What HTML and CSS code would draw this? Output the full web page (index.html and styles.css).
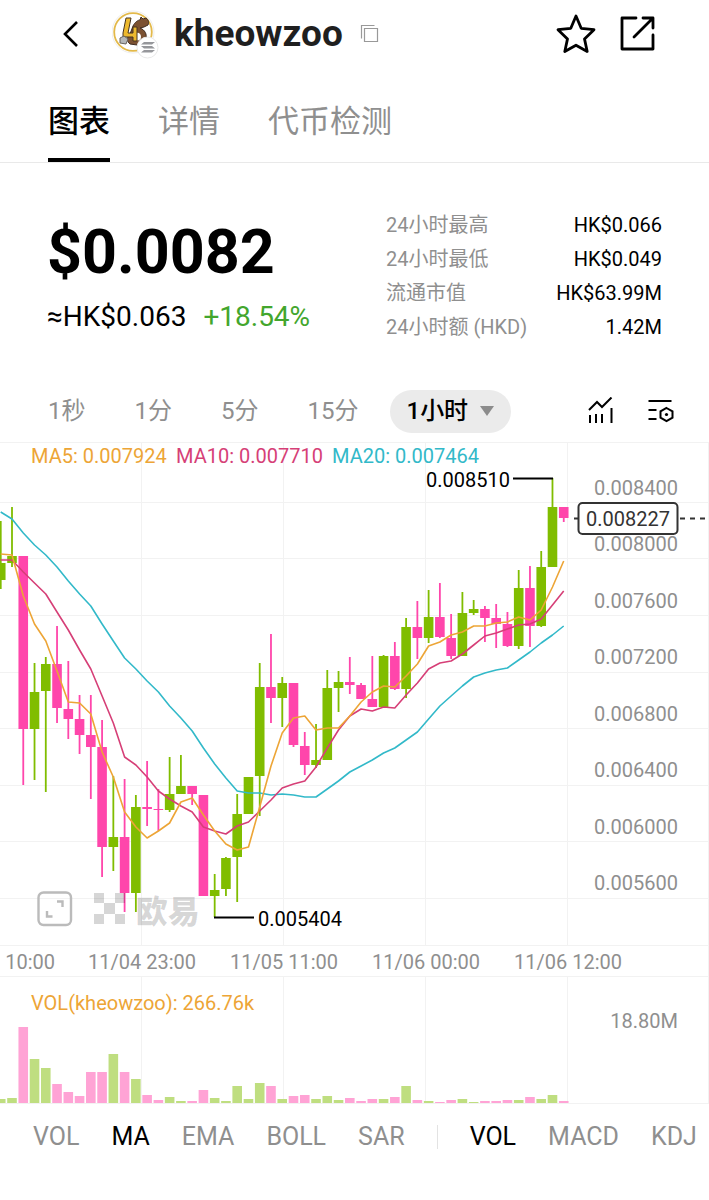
FILE: index.html
```html
<!DOCTYPE html>
<html lang="zh-CN">
<head>
<meta charset="utf-8">
<meta name="viewport" content="width=device-width, initial-scale=1">
<title>kheowzoo</title>
<link rel="stylesheet" href="styles.css">
</head>
<body>
<header class="topbar">
  <button class="icon-btn" aria-label="返回">
    <svg width="20" height="28" viewBox="0 0 20 28"><path d="M17 2 5 14l12 12" fill="none" stroke="#000" stroke-width="2.600"/></svg>
  </button>
  <div class="avatar">
    <svg width="48" height="50" viewBox="0 0 48 50" aria-hidden="true">
      <circle cx="21" cy="23" r="21" fill="#fff" stroke="#eee"/>
      <circle cx="21" cy="23" r="18.800" fill="#fff" stroke="#e3b94a" stroke-width="1.800"/>
      <path d="M21 17c2-4 5-6 7-6l1-3 2 2 3-1c3 2 3 5 2 7l-4 2-4 1c5 2 7 6 6 11-1 4-4 6-9 6l-7-1c-4-3-3-7 0-10z" fill="#7c5232" stroke="#3e2b20"/>
      <path d="M24 24c3-1 5 1 5 4s-3 4-5 3z" fill="#fff"/>
      <path d="M14 9h5l-3 15h5v-6h4v14h-4v-4H11v-4z" fill="#edb92e" stroke="#473420"/>
      <path d="m8 29 4-2 4 3-2 5-6-1z" fill="#b4b7b9" stroke="#68645e"/>
      <circle cx="35.500" cy="38.500" r="10.500" fill="#fff" stroke="#e9e9e9"/>
      <path d="m32 33h11l-3 2.500H29zM29 37h11l3 2.500H32zM32 41h11l-3 2.500H29z" fill="#96979b"/>
    </svg>
  </div>
  <h1 class="token">kheowzoo</h1>
  <button class="icon-btn" aria-label="复制">
    <svg width="20" height="20" viewBox="0 0 20 20" fill="none" stroke="#999" stroke-width="1.200"><path d="M1.500 14.500v-13h13"/><path d="M4.500 4.500h13v13h-13z"/></svg>
  </button>
  <div class="actions">
    <button class="icon-btn" aria-label="收藏">
      <svg width="42" height="42" viewBox="0 0 42 42"><path d="m21 3 5.200 12.300L39 16.700l-9.500 9.200 2.700 12.600L21 32.200 9.800 38.500l2.700-12.600L3 16.700l12.800-1.400z" fill="none" stroke="#000" stroke-width="2.800" stroke-linejoin="round"/></svg>
    </button>
    <button class="icon-btn" aria-label="分享">
      <svg width="38" height="38" viewBox="0 0 38 38" fill="none" stroke="#000" stroke-width="2.800" stroke-linecap="round" stroke-linejoin="round"><path d="M17 3H3v31h31V20M24 3h10v10M34 3 15 22"/></svg>
    </button>
  </div>
</header>

<nav class="tabs">
  <a class="tab tab-on" href="#chart">图表</a>
  <a class="tab" href="#detail">详情</a>
  <a class="tab" href="#check">代币检测</a>
</nav>

<main>
  <section class="summary">
    <div>
      <div class="price">$0.0082</div>
      <div class="sub"><span>≈HK$0.063</span><span class="up">+18.54%</span></div>
    </div>
    <dl class="stats">
      <div class="stat"><dt>24小时最高</dt><dd>HK$0.066</dd></div>
      <div class="stat"><dt>24小时最低</dt><dd>HK$0.049</dd></div>
      <div class="stat"><dt>流通市值</dt><dd>HK$63.99M</dd></div>
      <div class="stat"><dt>24小时额 (HKD)</dt><dd>1.42M</dd></div>
    </dl>
  </section>

  <div class="periods">
    <button class="period">1秒</button>
    <button class="period">1分</button>
    <button class="period">5分</button>
    <button class="period">15分</button>
    <button class="period period-on">1小时<svg width="16" height="10" viewBox="0 0 16 10" aria-hidden="true"><path d="M1 0h14L8 10z" fill="#8c8c8c"/></svg></button>
    <div class="tools">
      <button class="icon-btn" aria-label="指标">
        <svg width="28" height="28" viewBox="0 0 28 28" fill="none" stroke="#000" stroke-width="2"><path d="m2 13 8-8 5 5 9.500-9.500M3 18v8M9 17v9M15 17v9M24.500 11v15"/></svg>
      </button>
      <button class="icon-btn" aria-label="设置">
        <svg width="28" height="28" viewBox="0 0 28 28" fill="none" stroke="#000" stroke-width="2"><path d="M1.500 4h23M1.500 13h8M1.500 22h8M19.500 11l6 3.400v6.200l-6 3.400-6-3.400v-6.200z"/><circle cx="19.500" cy="17.500" r="1.600" fill="#000" stroke="none"/></svg>
      </button>
    </div>
  </div>

  <section class="chart" id="chart">
    <svg class="plot" viewBox="0 442 709 662" role="img" aria-label="kheowzoo K线图">
      <path class="grid" d="M0 442.500h709M0 502.500h709M0 558.500h709M0 615.500h709M0 672.500h709M0 728.500h709M0 785.500h709M0 841.500h709M0 898.500h709M0 945.500h709M0 976.500h709M0 1103.500h709M141.500 442v503M283.500 442v503M425.500 442v503M567.500 442v503M141.500 977v126M283.500 977v126M425.500 977v126M567.500 977v126M708.500 442v661"/>
      <g id="volumes"></g>
      <g id="candles"></g>
      <g id="averages"></g>
      <text class="gold" x="31" y="463">MA5: 0.007924</text>
      <text class="rose" x="176" y="463">MA10: 0.007710</text>
      <text class="teal" x="332" y="463">MA20: 0.007464</text>
      <path class="mark" d="M513 478.500h40M214 917.500h40"/>
      <text class="ink" x="426" y="487">0.008510</text>
      <text class="ink" x="258" y="926">0.005404</text>
      <g class="end">
        <text x="678" y="495">0.008400</text>
        <text x="678" y="551">0.008000</text>
        <text x="678" y="608">0.007600</text>
        <text x="678" y="664">0.007200</text>
        <text x="678" y="721">0.006800</text>
        <text x="678" y="777">0.006400</text>
        <text x="678" y="834">0.006000</text>
        <text x="678" y="890">0.005600</text>
        <text x="678" y="1028">18.80M</text>
        <text x="55" y="969">10:00</text>
      </g>
      <path class="dash" d="M574 518.500h5M680 518.500h29"/>
      <rect class="tag" x="578.500" y="503" width="99" height="31" rx="4"/>
      <text class="dark" x="586" y="526">0.008227</text>
      <g class="mid">
        <text x="142" y="969">11/04 23:00</text>
        <text x="284" y="969">11/05 11:00</text>
        <text x="426" y="969">11/06 00:00</text>
        <text x="568" y="969">11/06 12:00</text>
      </g>
      <text class="gold" x="31" y="1010">VOL(kheowzoo): 266.76k</text>
    </svg>
    <div class="overlay">
      <button class="icon-btn" aria-label="全屏">
        <svg width="36" height="36" viewBox="0 0 36 36" fill="none" stroke="#bbb" stroke-width="2.400"><rect x="1.500" y="1.500" width="32.500" height="32.500" rx="5"/><path d="M20 10.500h5.500V16M10 20v5.500h5.500"/></svg>
      </button>
      <div class="brand">
        <svg width="31" height="31" viewBox="0 0 31 31" aria-hidden="true"><path d="M0 0h10v10H0zM21 0h10v10H21zM10 10h11v11H10zM0 21h10v10H0zM21 21h10v10H21z" fill="currentColor"/></svg>
        <span>欧易</span>
      </div>
    </div>
  </section>

  <div class="indicators">
    <button class="ind">VOL</button>
    <button class="ind ind-on">MA</button>
    <button class="ind">EMA</button>
    <button class="ind">BOLL</button>
    <button class="ind">SAR</button>
    <span class="rule"></span>
    <button class="ind ind-on">VOL</button>
    <button class="ind">MACD</button>
    <button class="ind">KDJ</button>
  </div>
</main>
<script src="chart.js"></script>
</body>
</html>
```
FILE: styles.css
```css
* { box-sizing: border-box; }
body {
  margin: 0;
  background: #fff;
  color: #000;
  font-family: Roboto, "Noto Sans CJK SC", sans-serif;
  overflow-x: hidden;
}
button {
  margin: 0;
  padding: 0;
  border: 0;
  background: none;
  color: inherit;
  font: inherit;
  white-space: nowrap;
}
svg { display: block; }
.icon-btn { flex: none; }

.topbar {
  display: flex;
  align-items: center;
  height: 68px;
  padding: 0 52px 0 60px;
}
.avatar { margin: 0 14px 0 32px; }
.token {
  margin: 0 17px 0 0;
  color: #1f1f1f;
  font-size: 37px;
  line-height: 44px;
  font-weight: 700;
}
.actions { display: flex; align-items: center; gap: 22px; margin-left: auto; }

.tabs {
  display: flex;
  gap: 48px;
  padding: 20px 48px 0;
  border-bottom: 1px solid #e9e9e9;
}
.tab {
  height: 74px;
  color: #8f8f8f;
  font-size: 31px;
  line-height: 68px;
  text-decoration: none;
}
.tab-on { color: #000; font-weight: 500; border-bottom: 4px solid #000; }

.summary {
  display: flex;
  justify-content: space-between;
  padding: 45px 47px 0;
}
.price { font-size: 61px; line-height: 88px; font-weight: 700; }
.sub { display: flex; gap: 17px; font-size: 28px; line-height: 42px; }
.up { color: #43a62d; }
.stats { width: 276px; margin: 0; }
.stat {
  display: flex;
  justify-content: space-between;
  font-size: 20px;
  line-height: 34px;
}
.stat dt { color: #8f8f8f; }
.stat dd { margin: 0; }

.periods {
  display: flex;
  align-items: center;
  gap: 49px;
  height: 62px;
  margin-top: 36px;
  padding: 0 34px 0 48px;
}
.period { color: #8f8f8f; font-size: 24px; line-height: 43px; }
.period-on {
  display: flex;
  align-items: center;
  gap: 11px;
  margin-left: -17px;
  padding: 0 16px;
  border-radius: 22px;
  background: #ebebeb;
  color: #000;
  font-weight: 500;
}
.tools { display: flex; gap: 32px; margin-left: auto; }

.chart { position: relative; }
.plot { width: 100%; height: auto; font-size: 20px; fill: #8f8f8f; }
.grid { fill: none; stroke: #f2f2f2; }
.gold { fill: #eda536; }
.rose { fill: #d63f77; }
.teal { fill: #32b9c9; }
.ink { fill: #000; }
.dark { fill: #333; }
.end { text-anchor: end; }
.mid { text-anchor: middle; }
.mark { fill: none; stroke: #000; stroke-width: 2; }
.dash { fill: none; stroke: #333; stroke-width: 2; stroke-dasharray: 5 5; }
.tag { fill: #fff; stroke: #333; stroke-width: 2; }
.up-candle { fill: #80bd00; }
.down-candle { fill: #ff46ab; }
.up-vol { fill: #bfde80; }
.down-vol { fill: #ffa3d5; }
.line-gold, .line-rose, .line-teal { fill: none; stroke-width: 1.600; stroke-linejoin: round; }
.line-gold { stroke: #eda536; }
.line-rose { stroke: #d63f77; }
.line-teal { stroke: #32b9c9; }

.overlay {
  position: absolute;
  left: 5.200%;
  bottom: 26.800%;
  display: flex;
  align-items: center;
  gap: 21px;
}
.brand {
  display: flex;
  align-items: center;
  gap: 11px;
  color: rgba(0, 0, 0, 0.16);
  font-family: "Noto Sans CJK SC", sans-serif;
  font-size: 32px;
  line-height: 30px;
  font-weight: 900;
}

.indicators {
  display: flex;
  align-items: center;
  gap: 32px;
  padding: 15px 0 46px 33px;
  overflow: hidden;
}
.ind { color: #8f8f8f; font-size: 25px; line-height: 36px; }
.ind-on { color: #000; }
.rule { flex: none; width: 1px; height: 24px; background: #e3e3e3; }
```
FILE: chart.js
```js
// Each candle: rising (1) or falling (0), high, body top, body bottom, low, volume top.
const candles = [
  [1,521,563,580,589,1099],[1,507,556,563,567,1098],[0,556,556,729,785,1027],[1,663,692,729,780,1059],
  [1,657,664,691,792,1068],[0,626,664,708,723,1084],[0,661,709,719,739,1092],[0,695,719,735,754,1096],
  [0,695,735,747,799,1072],[0,720,747,847,877,1072],[1,776,837,847,871,1054],[0,779,837,893,912,1072],
  [1,795,807,893,912,1079],[0,761,807,809,826,1095],[0,789,809,810,831,1100],[1,757,794,810,812,1097],
  [1,755,786,794,794,1101],[0,786,786,794,805,1101],[0,795,795,896,896,1090],[1,874,890,896,917,1098],
  [1,857,858,889,896,1101],[1,794,814,857,902,1086],[1,777,777,814,814,1099],[1,663,687,776,816,1083],
  [0,634,687,698,723,1086],[1,677,683,698,727,1099],[0,683,683,745,747,1096],[0,732,746,765,775,1095],
  [1,724,760,765,768,1099],[1,670,688,760,760,1096],[1,671,682,688,712,1100],[0,657,682,685,694,1098],
  [0,683,685,699,699,1101],[0,656,699,707,707,1099],[1,655,656,707,707,1099],[0,642,656,689,690,1097],
  [1,618,627,689,698,1086],[0,601,627,638,659,1100],[1,590,617,638,643,1101],[0,583,617,637,638,1102],
  [0,614,638,656,659,1100],[1,592,613,656,656,1099],[1,600,609,613,615,1102],[0,606,609,618,642,1101],
  [0,604,618,624,648,1101],[0,612,624,646,647,1100],[1,570,588,646,649,1100],[0,566,588,626,647,1097],
  [1,551,567,626,627,1099],[1,478,507,567,567,1095],[0,507,507,518,522,1101]
];
const averages = {
  'line-teal': [512,519,533,545,555,567,581,594,606,624,641,658,669,681,692,706,718,731,748,764,778,791,793,793,795,794,795,797,797,789,781,772,766,760,753,748,740,732,719,706,696,686,677,673,670,668,660,652,643,635,626],
  'line-rose': [560,560,572,583,594,612,630,650,669,696,723,757,765,777,791,799,806,812,827,831,834,826,822,811,800,788,784,781,767,748,730,716,709,711,707,708,695,683,669,663,661,654,645,636,633,629,625,624,619,605,591],
  'line-gold': [554,555,596,624,641,671,702,703,714,752,777,812,827,838,831,823,802,798,815,831,844,850,847,807,766,733,718,716,730,728,728,716,702,692,686,687,676,664,646,642,635,632,626,626,623,622,617,620,610,587,561]
};
const step = 11.26;
const centre = i => 12 + (i - 1) * step;
const ns = 'http://www.w3.org/2000/svg';

function add(parent, tag, attrs) {
  const el = document.createElementNS(ns, tag);
  for (const key in attrs) el.setAttribute(key, attrs[key]);
  document.getElementById(parent).appendChild(el);
}

candles.forEach(([up, high, top, bottom, low, vol], i) => {
  const x = centre(i);
  const kind = up ? 'up' : 'down';
  add('candles', 'rect', { class: kind + '-candle', x: x - 0.9, y: high, width: 1.8, height: low - high });
  add('candles', 'rect', { class: kind + '-candle', x: x - 4.8, y: top, width: 9.6, height: bottom - top });
  add('volumes', 'rect', { class: kind + '-vol', x: x - 4.8, y: vol, width: 9.6, height: 1103 - vol });
});
for (const name in averages) {
  const points = averages[name].map((y, i) => centre(i).toFixed(1) + ',' + y).join(' ');
  add('averages', 'polyline', { class: name, points });
}
```
